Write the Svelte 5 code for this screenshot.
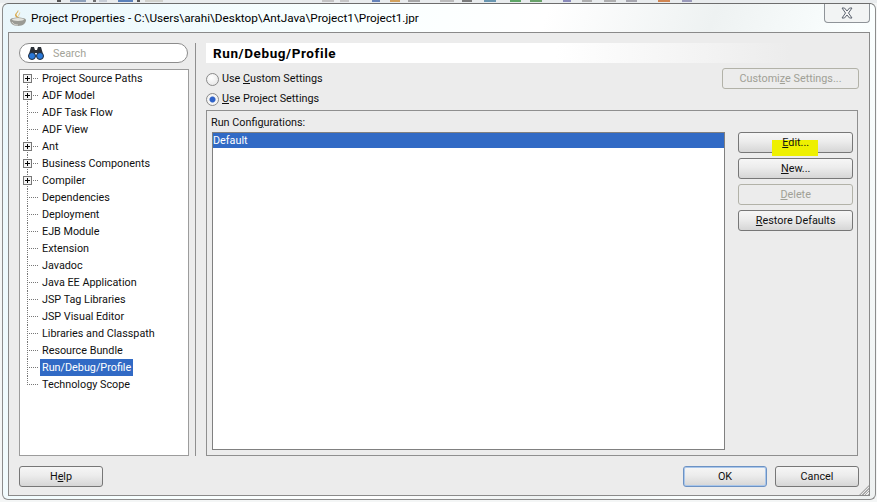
<script lang="ts">
	const nodes = [
		{ label: 'Project Source Paths', expandable: true },
		{ label: 'ADF Model', expandable: true },
		{ label: 'ADF Task Flow' },
		{ label: 'ADF View' },
		{ label: 'Ant', expandable: true },
		{ label: 'Business Components', expandable: true },
		{ label: 'Compiler', expandable: true },
		{ label: 'Dependencies' },
		{ label: 'Deployment' },
		{ label: 'EJB Module' },
		{ label: 'Extension' },
		{ label: 'Javadoc' },
		{ label: 'Java EE Application' },
		{ label: 'JSP Tag Libraries' },
		{ label: 'JSP Visual Editor' },
		{ label: 'Libraries and Classpath' },
		{ label: 'Resource Bundle' },
		{ label: 'Run/Debug/Profile', selected: true },
		{ label: 'Technology Scope' }
	];

	// bits of the toolbar behind the dialog that stick out above it
	const scraps = [
		[57, 4, '#222'], [70, 16, '#6f87a8'], [93, 3, '#444'], [99, 8, '#b9c2cc'], [118, 15, '#2a5ca8'],
		[137, 3, '#222'], [145, 18, '#c8c8c0'], [322, 12, '#b5b5b5'], [340, 9, '#b8b8b8'], [372, 8, '#3b62a8'],
		[390, 10, '#c9882c'], [408, 12, '#8f8f8f'], [440, 14, '#aaa'], [462, 10, '#555'], [484, 12, '#3d7a9c'],
		[510, 11, '#2f8f3a'], [530, 12, '#3d8a3d'], [563, 8, '#6a6aa8'], [582, 10, '#999'], [604, 12, '#999'],
		[626, 11, '#8f8f9a'], [658, 12, '#c8641e'], [682, 10, '#7f7fa8']
	] as const;
</script>

<div class="screen">
	<svg class="scraps" width="877" height="3">
		{#each scraps as [x, w, fill]}
			<rect {x} y="0" width={w} height="2" {fill} opacity="0.75" />
		{/each}
	</svg>
	<div class="window">
		<div class="titlebar">
			<svg class="java" width="18" height="18" viewBox="0 0 18 18">
				<path d="M9 1c2 2-3 3-1 6 1 1 2 1 2 2-2 0-4-1-4-3 0-2 3-3 3-5z" fill="#d9a441" />
				<path d="M11 3c1 2-2 3-.5 5-1.500-.5-1.500-2-.5-3z" fill="#e8c878" />
				<path d="M1 11c0-1.500 3.500-2.500 8-2.500s8 1 8 2.500c0 3-3 6-8 6s-8-3-8-6z" fill="#9a9a94" />
				<ellipse cx="9" cy="10.500" rx="6" ry="1.500" fill="#e4e4de" />
				<path d="M3 13c1 2 3 3 6 3" stroke="#d8d8d2" fill="none" />
			</svg>
			<span class="title">Project Properties - C:\Users\arahi\Desktop\AntJava\Project1\Project1.jpr</span>
			<div class="close">
				<svg width="14" height="12" viewBox="0 0 14 12">
					<path d="M2 1h2.500L7 4l2.500-3H12L8.500 6 12 11H9.500L7 8l-2.500 3H2l3.500-5z" fill="#f4f4f4" stroke="#5c6470" />
				</svg>
			</div>
		</div>

		<div class="panel">
			<div class="columns">
				<div class="nav">
					<div class="search">
						<svg width="16" height="14" viewBox="0 0 16 14">
							<path d="M3 1h3l1 3h2l1-3h3l2 7H9V7H7v1H1z" fill="#2b3038" />
							<circle cx="4" cy="10" r="3.500" fill="#2a78d8" stroke="#222c3a" />
							<circle cx="12" cy="10" r="3.500" fill="#2a78d8" stroke="#222c3a" />
						</svg>
						<span>Search</span>
					</div>
					<div class="tree">
						<ul>
							{#each nodes as node, i}
								<li class:last={i === nodes.length - 1}>
									<i class="branch"></i>
									{#if node.expandable}
										<i class="expander"></i>
									{/if}
									<span class:selected={node.selected}>{node.label}</span>
								</li>
							{/each}
						</ul>
					</div>
				</div>

				<div class="divider"></div>

				<div class="content">
					<h2>Run/Debug/Profile</h2>
					<div class="mode">
						<div class="radios">
							<label><i class="radio"></i><span>Use <u>C</u>ustom Settings</span></label>
							<label><i class="radio on"></i><span><u>U</u>se Project Settings</span></label>
						</div>
						<div class="btn off customize">Customi<u>z</u>e Settings...</div>
					</div>
					<div class="group">
						<div class="list-col">
							<div class="list-label">Run Confi<u>g</u>urations:</div>
							<div class="list">
								<div class="row">Default</div>
							</div>
						</div>
						<div class="actions">
							<div class="btn"><i class="marker"></i><span class="caption"><u>E</u>dit...</span></div>
							<div class="btn"><u>N</u>ew...</div>
							<div class="btn off"><u>D</u>elete</div>
							<div class="btn"><u>R</u>estore Defaults</div>
						</div>
					</div>
				</div>
			</div>

			<div class="footer">
				<div class="btn wide">H<u>e</u>lp</div>
				<div class="footer-right">
					<div class="btn wide default">OK</div>
					<div class="btn wide">Cancel</div>
				</div>
			</div>
			<i class="grip"></i>
		</div>
	</div>
</div>

<style>
	:global(body) {
		margin: 0;
		background: #fff;
	}

	.screen {
		width: 877px;
		height: 502px;
		overflow: hidden;
		background: #f4f6f6;
		font-family: Roboto, 'Liberation Sans', sans-serif;
		font-size: 10.8px;
		color: #101010;
	}

	.scraps {
		display: block;
		background: #e9ecee;
	}

	.window {
		box-sizing: border-box;
		width: 874px;
		height: 497px;
		margin-left: 2px;
		padding: 0 5px 4px 5px;
		background:
			linear-gradient(110deg, #e9f6fb 0%, #f8ffff 30%, #fff 52%, #eef2f2 68%, #fbffff 82%, #eef1f1 100%);
		border: 1px solid #8c8c8c;
		border-top-color: #6d6d6d;
		border-radius: 6px;
	}

	.titlebar {
		display: flex;
		align-items: center;
		height: 28px;
		padding-left: 1px;
	}

	.java {
		margin-right: 4px;
	}

	.title {
		font-size: 11.75px;
		color: #000;
		white-space: nowrap;
	}

	.close {
		box-sizing: border-box;
		display: flex;
		align-items: center;
		justify-content: center;
		width: 46px;
		height: 19px;
		margin-left: auto;
		margin-top: -9px;
		background: #f2f4f4;
		border: 1px solid #8f9499;
		border-top: 0;
		border-radius: 0 0 4px 4px;
	}

	.panel {
		position: relative;
		box-sizing: border-box;
		height: 464px;
		padding: 10px 10px 7px 10px;
		background: #ececec;
		border: 1px solid #8a8a8a;
	}

	.columns {
		display: flex;
		height: 413px;
	}

	.nav {
		display: flex;
		flex-direction: column;
		gap: 6px;
		width: 170px;
	}

	.search {
		box-sizing: border-box;
		display: flex;
		align-items: center;
		gap: 9px;
		width: 169px;
		height: 20px;
		padding-left: 8px;
		background: #fff;
		border: 1px solid #8c8c8c;
		border-radius: 10px;
		color: #a3a398;
	}

	.tree {
		box-sizing: border-box;
		flex: 1;
		background: #fff;
		border: 1px solid #9c9c9c;
	}

	ul {
		margin: 0;
		padding: 0;
		list-style: none;
	}

	li {
		position: relative;
		height: 17px;
		line-height: 18px;
		padding-left: 20px;
		white-space: nowrap;
	}

	li span {
		display: inline-block;
		height: 17px;
		padding: 0 2px;
	}

	.branch {
		position: absolute;
		left: 7px;
		top: 0;
		bottom: 0;
		width: 12px;
		background:
			repeating-linear-gradient(180deg, #777 0 1px, transparent 1px 2px) 0 0 / 1px 100% no-repeat,
			repeating-linear-gradient(90deg, #777 0 1px, transparent 1px 2px) 0 8px / 100% 1px no-repeat;
	}

	li:first-child .branch {
		top: 8px;
		background-position: 0 0, 0 0;
	}

	li.last .branch {
		bottom: 8px;
	}

	.expander {
		position: absolute;
		left: 3px;
		top: 4px;
		box-sizing: border-box;
		width: 9px;
		height: 9px;
		border: 1px solid #777;
		background:
			linear-gradient(#000, #000) center / 5px 1px no-repeat,
			linear-gradient(#000, #000) center / 1px 5px no-repeat,
			#f4f4f4;
	}

	.selected {
		background: #316ac5;
		color: #fff;
	}

	.divider {
		width: 1px;
		margin-left: 6px;
		background: #8f8f8f;
	}

	.content {
		display: flex;
		flex-direction: column;
		width: 653px;
		margin-left: 10px;
	}

	h2 {
		height: 20px;
		margin: 0;
		padding-left: 7px;
		width: 577px;
		font-size: 13.5px;
		letter-spacing: 0.6px;
		line-height: 20px;
		font-weight: 700;
		color: #000;
		background: linear-gradient(90deg, #fff 60%, #ececec);
	}

	.mode {
		display: flex;
		justify-content: space-between;
		height: 47px;
		padding-top: 5px;
		box-sizing: border-box;
	}

	.radios {
		display: flex;
		flex-direction: column;
		gap: 6px;
		padding-top: 4px;
	}

	label {
		display: flex;
		align-items: center;
		gap: 3px;
		height: 14px;
		line-height: 16px;
	}

	.radio {
		box-sizing: border-box;
		width: 13px;
		height: 13px;
		border: 1px solid #8a8a8a;
		border-radius: 50%;
		background: radial-gradient(circle at 40% 35%, #fff, #e2e2e2);
	}

	.radio.on {
		background: radial-gradient(circle, #2f62c8 0 2.5px, #f4f4f4 3.500px);
	}

	.btn {
		position: relative;
		box-sizing: border-box;
		display: flex;
		align-items: center;
		justify-content: center;
		height: 21px;
		background: linear-gradient(#f6f6f6, #ececec 45%, #d6d6d6);
		border: 1px solid #777;
		border-radius: 3px;
		color: #111;
		white-space: pre;
	}

	.btn.off {
		background: #ececec;
		border-color: #b2b2a8;
		color: #a0a096;
	}

	.customize {
		width: 137px;
	}

	.group {
		box-sizing: border-box;
		display: flex;
		width: 652px;
		height: 346px;
		padding: 4px 5px 5px 5px;
		border: 1px solid #8f8f8f;
	}

	.list-col {
		display: flex;
		flex-direction: column;
		width: 514px;
	}

	.list-label {
		height: 17px;
		line-height: 15px;
		margin-left: -1px;
		white-space: nowrap;
	}

	.list {
		flex: 1;
		background: #fff;
		border: 1px solid #808080;
		box-sizing: border-box;
		margin-right: -1px;
	}

	.row {
		height: 15px;
		line-height: 15px;
		background: #316ac5;
		color: #fff;
	}

	.actions {
		display: flex;
		flex-direction: column;
		gap: 5px;
		width: 115px;
		margin-left: 14px;
		margin-right: -1px;
		padding-top: 17px;
	}

	.caption {
		position: relative;
	}

	.marker {
		position: absolute;
		left: 33px;
		top: 7px;
		width: 46px;
		height: 16px;
		background: #eef000;
	}

	.footer {
		display: flex;
		justify-content: space-between;
		margin-top: 10px;
		width: 840px;
	}

	.footer-right {
		display: flex;
		gap: 8px;
	}

	.wide {
		width: 84px;
	}

	.default {
		border-color: #6c92c4;
		box-shadow: inset 0 0 0 1px #a9c6ea;
	}

	.grip {
		position: absolute;
		right: 0;
		bottom: 0;
		width: 10px;
		height: 10px;
		background: repeating-linear-gradient(135deg, transparent 0 1px, #a8a8a8 1px 2px);
		clip-path: polygon(100% 0, 100% 100%, 0 100%);
	}
</style>
